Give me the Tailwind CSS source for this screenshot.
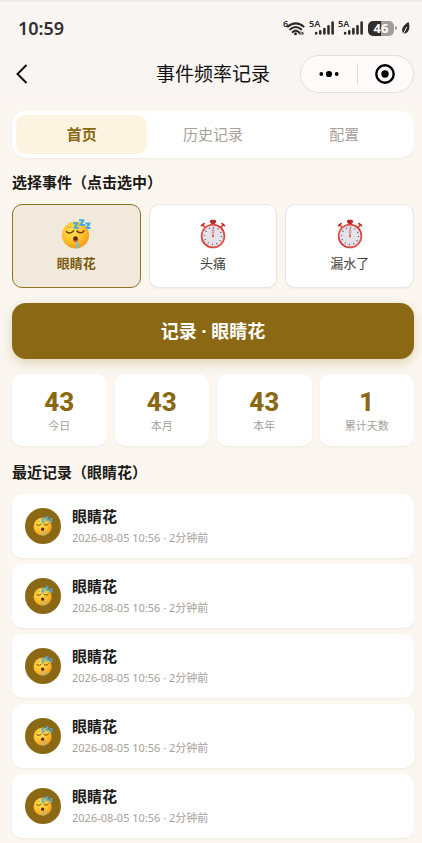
<!DOCTYPE html>
<html lang="zh-CN">
<head>
    <meta charset="UTF-8">
    <meta name="viewport" content="width=device-width, initial-scale=1.0">
    <title>事件频率记录</title>
    <script src="https://cdn.jsdelivr.net/npm/@tailwindcss/browser@4"></script>
</head>
<body class="min-h-screen bg-[#fbf7f0] font-['Noto_Sans','Noto_Sans_CJK_SC',sans-serif] text-[#1c1917]">

    <!-- shared drawings -->
    <svg class="absolute size-0" aria-hidden="true">
        <defs>
            <radialGradient id="face" cx="40%" cy="32%" r="70%">
                <stop offset="0" stop-color="#ffe256" />
                <stop offset=".55" stop-color="#fdc52f" />
                <stop offset="1" stop-color="#f29a1c" />
            </radialGradient>
            <linearGradient id="rim" x1="0" y1="0" x2="1" y2="1">
                <stop offset="0" stop-color="#ee6a60" />
                <stop offset=".5" stop-color="#d3362f" />
                <stop offset="1" stop-color="#e8675c" />
            </linearGradient>
        </defs>
        <symbol id="sleepy" viewBox="0 0 30 30">
            <circle cx="14.5" cy="16" r="13.6" fill="url(#face)" />
            <path d="M5.5 12.5c1 2 5 2.200 7-.6M16 12c1.500 2.500 5.500 2.300 7-.2" fill="none" stroke="#6b3a12" stroke-width="1.500" stroke-linecap="round" />
            <path d="M6 9.500c1-1.200 2.500-1.600 4-1.500" fill="none" stroke="#d98a1a" stroke-width=".8" stroke-linecap="round" />
            <ellipse cx="14.500" cy="20" rx="2.300" ry="2.800" fill="#5e2410" />
            <ellipse cx="14.500" cy="21.600" rx="1.300" ry=".9" fill="#d4533f" />
            <path d="M16.200 21.500c1.800 2 2.200 5.500 1.200 7.300-.8 1-2 .7-2.200-.5-.2-2.300 1-4 1-6.800z" fill="#6cc6ee" />
            <path d="M12.300 4.200h4.200l-3.200 4.600h4.400M18 1.300h4.600l-3.400 4.800h4.800M24.300 4.400h4.400l-3.200 4.500h4" fill="none" stroke="#48a9df" stroke-width="2" stroke-linejoin="round" />
        </symbol>
        <symbol id="stopwatch" viewBox="0 0 30 30">
            <path d="M4.200 5.200l3.600 4M25.800 5.200l-3.600 4" stroke="#cf3f37" stroke-width="1.500" />
            <path d="M3.600 6.600l2.400-2M26.400 6.600l-2.400-2" stroke="#bd2c28" stroke-width="1.800" stroke-linecap="round" />
            <rect x="13.400" y="3" width="3.200" height="4" fill="#8f2320" />
            <rect x="12" y=".8" width="6" height="3.600" rx="1.400" fill="#b92a27" />
            <circle cx="15" cy="17" r="12.300" fill="url(#rim)" />
            <circle cx="15" cy="17" r="10.500" fill="#e3e2ea" />
            <circle cx="15" cy="17" r="8.500" fill="none" stroke="#59596a" stroke-width="1.300" stroke-dasharray="1 3.450" />
            <circle cx="15" cy="12.500" r="1.600" fill="none" stroke="#c3c0ca" stroke-width=".5" />
            <path d="M15 18.500V9" stroke="#de5a50" stroke-width=".9" />
            <circle cx="15" cy="17" r=".9" fill="#d74a42" />
        </symbol>
        <symbol id="signal" viewBox="0 0 24 16">
            <path d="M4.500 13.500v.5M9 11.500v2.500M13.500 9v5M18 6v8M22.500 2v12" fill="none" stroke="#2c2b2a" stroke-width="2.800" stroke-linecap="round" />
        </symbol>
    </svg>

    <header class="border-t-2 border-[#ececee] bg-[#f9f5f3] pb-2">
        <div class="flex h-13 items-center justify-between pr-3 pl-[18px]">
            <time class="text-lg font-semibold text-[#33302f]">10:59</time>
            <div class="flex items-center gap-1">
                <svg class="h-4 w-[22px] overflow-visible" viewBox="0 0 22 16" aria-label="Wi-Fi">
                    <text x="0" y="7" font-size="9" font-weight="600" fill="#2c2b2a">6</text>
                    <path d="M5 6.500c4.500-4.300 11-4.300 15.500 0M7.300 9.300c3.300-3.100 7.500-3.100 10.800 0M9.700 12c2-1.800 4-1.800 6 0" fill="none" stroke="#2c2b2a" stroke-width="2.200" stroke-linecap="round" />
                    <circle cx="12.500" cy="13.800" r="1.500" fill="#2c2b2a" />
                    <path d="M17.500 11.200v4l-2.300-2zM18.600 11.200v4l2.400-2z" fill="#2c2b2a" />
                </svg>
                <div class="relative h-4 w-[25px]">
                    <span class="absolute -top-px left-0 text-[9px] leading-[9px] font-semibold text-[#2c2b2a]">5A</span>
                    <svg class="ml-[3px] h-4 w-[22px]"><use href="#signal" /></svg>
                </div>
                <div class="relative h-4 w-[25px]">
                    <span class="absolute -top-px left-0 text-[9px] leading-[9px] font-semibold text-[#2c2b2a]">5A</span>
                    <svg class="ml-[3px] h-4 w-[22px]"><use href="#signal" /></svg>
                </div>
                <div class="ml-px flex items-center gap-px">
                    <span class="flex h-[15px] w-[26px] items-center justify-center rounded-[5px] bg-linear-to-r from-[#302e2d] from-50% to-[#a39e9b] to-50% text-[13px] leading-none font-bold text-white">46</span>
                    <span class="h-1 w-0.5 rounded-r bg-[#a39e9b]"></span>
                </div>
                <svg class="h-[14px] w-[9px]" viewBox="0 0 9 14" aria-hidden="true">
                    <path d="M7.500 1C9 5 9 11 4 12.500l-1.500.2C0 10 .5 5 7.500 1z" fill="#2c2b2a" />
                    <path d="M2 13.500L5.800 6" stroke="#f9f5f3" stroke-width="1" />
                </svg>
            </div>
        </div>
        <div class="grid h-[40px] grid-cols-[1fr_auto_1fr] items-center pr-2 pl-3">
            <button class="flex size-5 items-center justify-center" aria-label="返回">
                <svg class="h-5 w-3" viewBox="0 0 12 20" fill="none" stroke="#111" stroke-width="2"><path d="M10.500 1L1.500 10l9 9" /></svg>
            </button>
            <h1 class="text-[19px] leading-6 text-[#111]">事件频率记录</h1>
            <div class="flex h-[38px] w-[114px] items-center justify-self-end rounded-full border border-[#e3dfdd] bg-[#fefbfa]">
                <button class="flex flex-1 justify-center" aria-label="更多">
                    <svg class="h-2 w-5" viewBox="0 0 20 8"><circle cx="2.300" cy="4" r="1.900" /><circle cx="10" cy="4" r="3.100" /><circle cx="17.700" cy="4" r="1.900" /></svg>
                </button>
                <span class="h-[22px] w-px bg-[#dcd8d6]"></span>
                <button class="flex flex-1 justify-center" aria-label="关闭">
                    <svg class="size-5" viewBox="0 0 20 20"><circle cx="10" cy="10" r="8.700" fill="none" stroke="#000" stroke-width="2.400" /><circle cx="10" cy="10" r="3.700" /></svg>
                </button>
            </div>
        </div>
    </header>

    <main class="pt-[9px] pr-2 pl-3">
        <nav class="grid grid-cols-3 rounded-[14px] bg-white p-1 text-[15px] text-[#a8a09c] shadow-xs">
            <button class="h-[39px] rounded-[10px] bg-[#fcf4e1] font-bold text-[#8a6914]">首页</button>
            <button class="h-[39px]">历史记录</button>
            <button class="h-[39px]">配置</button>
        </nav>

        <h2 class="mt-3 text-[15px] leading-6 font-bold">选择事件（点击选中）</h2>
        <div class="mt-[10px] grid grid-cols-3 gap-2 text-[13px] leading-5 text-[#44403c]">
            <button class="flex h-[84px] flex-col items-center justify-center gap-1 rounded-[10px] border border-[#8f7226] bg-[#f1e9dc] font-bold text-[#7a5c10]">
                <svg class="size-[30px]"><use href="#sleepy" /></svg>
                眼睛花
            </button>
            <button class="flex h-[84px] flex-col items-center justify-center gap-1 rounded-[10px] border border-[#e9e5e4] bg-white shadow-xs">
                <svg class="size-[30px]"><use href="#stopwatch" /></svg>
                头痛
            </button>
            <button class="flex h-[84px] flex-col items-center justify-center gap-1 rounded-[10px] border border-[#e9e5e4] bg-white shadow-xs">
                <svg class="size-[30px]"><use href="#stopwatch" /></svg>
                漏水了
            </button>
        </div>

        <button class="mt-[15px] h-14 w-full rounded-[14px] bg-[#8b6914] text-lg font-bold text-white shadow-[0_4px_12px_rgba(139,105,20,0.25)]">记录 · 眼睛花</button>

        <dl class="mt-[15px] grid grid-cols-4 gap-2 text-center">
            <div class="flex h-[72px] flex-col-reverse items-center justify-center rounded-[10px] bg-white shadow-xs">
                <dt class="text-[11px] leading-4 text-[#a8a09c]">今日</dt>
                <dd class="font-[Roboto] text-[26px] leading-8 font-extrabold text-[#8b6914]">43</dd>
            </div>
            <div class="flex h-[72px] flex-col-reverse items-center justify-center rounded-[10px] bg-white shadow-xs">
                <dt class="text-[11px] leading-4 text-[#a8a09c]">本月</dt>
                <dd class="font-[Roboto] text-[26px] leading-8 font-extrabold text-[#8b6914]">43</dd>
            </div>
            <div class="flex h-[72px] flex-col-reverse items-center justify-center rounded-[10px] bg-white shadow-xs">
                <dt class="text-[11px] leading-4 text-[#a8a09c]">本年</dt>
                <dd class="font-[Roboto] text-[26px] leading-8 font-extrabold text-[#8b6914]">43</dd>
            </div>
            <div class="flex h-[72px] flex-col-reverse items-center justify-center rounded-[10px] bg-white shadow-xs">
                <dt class="text-[11px] leading-4 text-[#a8a09c]">累计天数</dt>
                <dd class="font-[Roboto] text-[26px] leading-8 font-extrabold text-[#8b6914]">1</dd>
            </div>
        </dl>

        <h2 class="mt-[14px] text-[15px] leading-6 font-bold">最近记录（眼睛花）</h2>
        <ul id="records" class="mt-[10px] flex flex-col gap-1.5"></ul>
    </main>

    <script>
        const records = Array(5).fill({ name: "眼睛花", time: "2026-08-05 10:56", ago: "2分钟前" });

        document.getElementById("records").innerHTML = records.map((r) => `
            <li class="flex h-16 items-center gap-[11px] rounded-[10px] bg-white px-[13px] shadow-xs">
                <span class="flex size-9 items-center justify-center rounded-full bg-[#8b6914]">
                    <svg class="size-5"><use href="#sleepy" /></svg>
                </span>
                <div>
                    <p class="text-[15px] leading-6 font-bold">${r.name}</p>
                    <p class="text-[11px] leading-5 text-[#a8a09c]">${r.time} · ${r.ago}</p>
                </div>
            </li>`).join("");
    </script>
</body>
</html>
